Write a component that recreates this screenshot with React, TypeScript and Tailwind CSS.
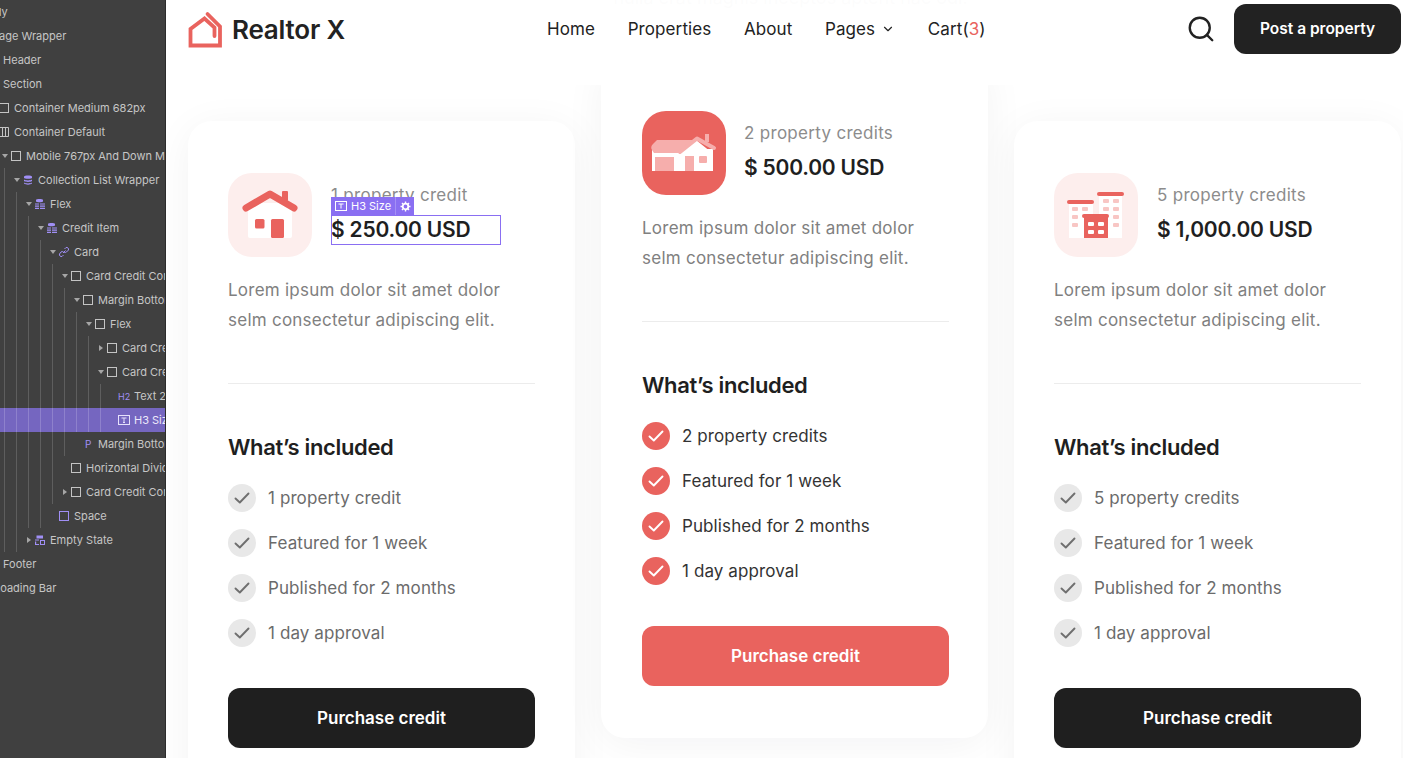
import { ChevronDown, Search } from "lucide-react";

const UI_FONT = "font-['Inter',sans-serif]";

type TreeIcon =
  | "box"
  | "boxPurple"
  | "columns"
  | "db"
  | "dbList"
  | "link"
  | "h2"
  | "text"
  | "p"
  | "empty"
  | "none";

type TreeRow = {
  label: string;
  x: number;
  icon: TreeIcon;
  caret?: "down" | "right";
};

const treeRows: TreeRow[] = [
  { label: "Body", x: -19, icon: "none" },
  { label: "Page Wrapper", x: -8, icon: "none" },
  { label: "Header", x: 3, icon: "none" },
  { label: "Section", x: 3, icon: "none" },
  { label: "Container Medium 682px", x: 14, icon: "box" },
  { label: "Container Default", x: 14, icon: "columns" },
  { label: "Mobile 767px And Down Menu", x: 26, icon: "box", caret: "down" },
  { label: "Collection List Wrapper", x: 38, icon: "db", caret: "down" },
  { label: "Flex", x: 50, icon: "dbList", caret: "down" },
  { label: "Credit Item", x: 62, icon: "dbList", caret: "down" },
  { label: "Card", x: 74, icon: "link", caret: "down" },
  { label: "Card Credit Content", x: 86, icon: "box", caret: "down" },
  { label: "Margin Bottom", x: 98, icon: "box", caret: "down" },
  { label: "Flex", x: 110, icon: "box", caret: "down" },
  { label: "Card Credit", x: 122, icon: "box", caret: "right" },
  { label: "Card Credit", x: 122, icon: "box", caret: "down" },
  { label: "Text 2", x: 134, icon: "h2" },
  { label: "H3 Size", x: 134, icon: "text" },
  { label: "Margin Bottom", x: 98, icon: "p" },
  { label: "Horizontal Divider", x: 86, icon: "box" },
  { label: "Card Credit Content", x: 86, icon: "box", caret: "right" },
  { label: "Space", x: 74, icon: "boxPurple" },
  { label: "Empty State", x: 50, icon: "empty", caret: "right" },
  { label: "Footer", x: 3, icon: "none" },
  { label: "Loading Bar", x: -6, icon: "none" },
];

// vertical tree guides: x and first/last row index they cross
const guides = [
  { x: 4, from: 7, to: 22 },
  { x: 16, from: 8, to: 22 },
  { x: 28, from: 9, to: 21 },
  { x: 40, from: 10, to: 21 },
  { x: 52, from: 11, to: 20 },
  { x: 64, from: 12, to: 18 },
  { x: 76, from: 13, to: 17 },
  { x: 88, from: 14, to: 17 },
  { x: 100, from: 16, to: 17 },
];

function NodeIcon({ icon }: { icon: TreeIcon }) {
  if (icon === "h2") {
    return <span className="w-3 text-[9px] leading-none text-[#a08ff5]">H2</span>;
  }
  if (icon === "p") {
    return <span className="w-3 pl-[3px] text-[10px] leading-none text-[#a08ff5]">P</span>;
  }
  const purple = "#a08ff5";
  const gray = "#c4c4c4";
  return (
    <svg width="12" height="12" viewBox="0 0 12 12" fill="none" className="shrink-0">
      {icon === "box" && <rect x="1.500" y="1.500" width="9" height="9" stroke={gray} />}
      {icon === "boxPurple" && <rect x="1.500" y="1.500" width="9" height="9" stroke={purple} />}
      {icon === "columns" && (
        <path d="M1.500 1.500h9v9h-9zM4.500 1.500v9M7.500 1.500v9" stroke={gray} />
      )}
      {icon === "db" && (
        <path
          d="M2 2.500C2 1 10 1 10 2.500V4C10 5 2 5 2 4ZM2 5.500C4 6.700 8 6.700 10 5.500V7C8 8.200 4 8.200 2 7ZM2 8.500C4 9.700 8 9.700 10 8.500V9.500C8 11 4 11 2 9.500Z"
          fill={purple}
        />
      )}
      {icon === "dbList" && (
        <path
          d="M2 2C2 .8 9 .8 9 2V3.600C9 4.600 2 4.600 2 3.600ZM1 5.400h4v1.200H1ZM6 5.400h5v1.200H6ZM1 7.600h4v1.200H1ZM6 7.600h5v1.200H6ZM1 9.800h4v1.200H1ZM6 9.800h5v1.200H6Z"
          fill={purple}
        />
      )}
      {icon === "link" && (
        <path
          d="M5 7l2.500-2.500M6.500 3l1.500-1.500a2 2 0 0 1 2.500 2.500L8.500 6a2 2 0 0 1-2.500 0M5.500 6a2 2 0 0 0-2.500 0L1.500 8a2 2 0 0 0 2.500 2.500L5.500 9"
          stroke={purple}
        />
      )}
      {icon === "text" && (
        <g stroke="#e6e1fb">
          <rect x=".5" y="1.500" width="11" height="9" />
          <path d="M3.500 4h5M6 4v4.500M5 8.500h2" />
        </g>
      )}
      {icon === "empty" && (
        <path
          d="M2.500 1.500h6.500v3H2.500ZM1 5.500h4v1H1ZM1 7.500h1.200v2.500H5v1H1ZM6 6h5v5H6Zm1 1v3h3V7Z"
          fill={purple}
        />
      )}
    </svg>
  );
}

function Sidebar() {
  return (
    <aside className="h-full w-[166px] shrink-0 overflow-hidden border-r border-[#2c2c2c] bg-[#404040] font-['Inter',sans-serif] text-[11px] text-[#c6c6c6]">
      {treeRows.map((row, i) => (
        <div key={i} className={`relative h-6 ${i === 17 ? "bg-[#7566c0] text-[#ece9fa]" : ""}`}>
          {guides
            .filter((g) => i >= g.from && i <= g.to)
            .map((g) => (
              <span
                key={g.x}
                className={`absolute top-0 bottom-0 w-px ${i === 17 ? "bg-[#8e81cc]" : "bg-[#5e5e5e]"}`}
                style={{ left: g.x }}
              />
            ))}
          <div
            className="flex h-full items-center whitespace-nowrap"
            style={{ marginLeft: row.x - 26 }}
          >
            <span className="flex w-[10px] shrink-0 items-center justify-center">
              {row.caret === "down" && (
                <span className="border-x-[3px] border-t-[4px] border-x-transparent border-t-[#a6a6a6]" />
              )}
              {row.caret === "right" && (
                <span className="border-y-[3px] border-l-[4px] border-y-transparent border-l-[#a6a6a6]" />
              )}
            </span>
            <span className="flex w-[16px] shrink-0 items-center">
              {row.icon !== "none" && <NodeIcon icon={row.icon} />}
            </span>
            <span>{row.label}</span>
          </div>
        </div>
      ))}
    </aside>
  );
}

function Logo() {
  return (
    <svg width="36" height="38" viewBox="0 0 36 38" fill="none">
      <path
        d="M27.500 25V16.500L17.500 7.500L3.500 18V34.500H33V15.500L20.500 3"
        stroke="#e9635e"
        strokeWidth="3.800"
        strokeLinecap="round"
        strokeLinejoin="miter"
      />
    </svg>
  );
}

function Header() {
  return (
    <header className="absolute inset-x-0 top-0 z-20 flex h-[85px] items-start bg-white/95 pl-[21px] pr-[2px]">
      <div className="mt-[10px] flex w-[360px] items-center gap-[9px]">
        <Logo />
        <span className="text-[26px] font-semibold tracking-[-0.2px] text-[#222]">Realtor X</span>
      </div>
      <nav className="mt-[14px] flex items-center gap-[32.6px] text-[17px] leading-[30px] tracking-[0.1px] text-[#222]">
        <a>Home</a>
        <a>Properties</a>
        <a>About</a>
        <a className="flex items-center gap-[6px]">
          Pages <ChevronDown size={14} strokeWidth={2} />
        </a>
        <a>
          Cart(<span className="text-[#e9635e]">3</span>)
        </a>
      </nav>
      <div className="ml-auto mt-1 flex items-center gap-[18px]">
        <Search size={30} strokeWidth={1.9} className="text-[#222]" />
        <button className="h-[50px] w-[167px] rounded-xl bg-[#222] text-[15.5px] font-semibold text-white">
          Post a property
        </button>
      </div>
    </header>
  );
}

function HouseIcon() {
  return (
    <svg width="84" height="84" viewBox="0 0 84 84" fill="none">
      <rect x="20" y="30" width="44" height="35" rx="2" fill="#fff" />
      <rect x="54" y="18" width="6" height="10" rx="1" fill="#e9635e" />
      <path d="M18 35L42 21L66 35" stroke="#e9635e" strokeWidth="7" strokeLinecap="round" strokeLinejoin="round" />
      <rect x="27" y="46" width="9.500" height="9.500" rx="1.500" fill="#e9635e" />
      <rect x="43" y="46" width="13" height="19" rx="1.500" fill="#e9635e" />
    </svg>
  );
}

function VillaIcon() {
  return (
    <svg width="84" height="84" viewBox="0 0 84 84" fill="none">
      <rect x="10" y="38" width="61" height="22" fill="#fff" />
      <path d="M38 41L54 29L69 41V60H38Z" fill="#fff" />
      <rect x="63" y="23" width="4" height="8" fill="#f6aeac" />
      <path d="M10 39Q8 36 11 33L15 29H52L38 42H12Z" fill="#f6aeac" />
      <path d="M38 41L55 27.500L72 37" stroke="#f6aeac" strokeWidth="4" strokeLinecap="round" strokeLinejoin="round" />
      <rect x="13" y="46" width="19" height="14" fill="#f6aeac" />
      <rect x="43" y="45" width="9" height="15" fill="#f6aeac" />
      <rect x="57" y="45" width="8" height="7" rx="1" fill="#f6aeac" />
    </svg>
  );
}

function BuildingsIcon() {
  const pink = "#f8c6c4";
  return (
    <svg width="84" height="84" viewBox="0 0 84 84" fill="none">
      <rect x="15" y="29" width="24" height="36" fill="#fff" />
      <rect x="45" y="20" width="23" height="45" fill="#fff" />
      <rect x="13" y="27" width="27" height="4" rx="2" fill="#e9635e" />
      <rect x="43" y="19" width="27" height="4" rx="2" fill="#e9635e" />
      {[
        [18, 34],
        [28, 34],
        [18, 42],
        [18, 50],
        [49, 26],
        [59, 26],
        [49, 34],
        [59, 34],
        [59, 42],
        [59, 50],
      ].map(([x, y]) => (
        <rect key={`${x}-${y}`} x={x} y={y} width="6" height="4" rx="1" fill={pink} />
      ))}
      <rect x="30" y="43" width="24" height="22" fill="#e9635e" />
      <rect x="28" y="41" width="27" height="4" rx="2" fill="#e9635e" />
      {[
        [34, 49],
        [44, 49],
        [34, 57],
        [44, 57],
      ].map(([x, y]) => (
        <rect key={`${x}-${y}`} x={x} y={y} width="6" height="4" rx="1" fill="#fff" />
      ))}
    </svg>
  );
}

function CheckDot({ active }: { active?: boolean }) {
  return (
    <span
      className={`flex h-7 w-7 shrink-0 items-center justify-center rounded-full ${
        active ? "bg-[#e9635e]" : "bg-[#e8e8e8]"
      }`}
    >
      <svg width="16" height="12" viewBox="0 0 16 12" fill="none">
        <path
          d="M1.500 6.500L5.800 10.500L14.500 1.500"
          stroke={active ? "#fff" : "#6f6f6f"}
          strokeWidth="1.900"
          strokeLinecap="round"
          strokeLinejoin="round"
        />
      </svg>
    </span>
  );
}

function SelectionOverlay() {
  return (
    <>
      <div className="absolute left-0 top-[24px] flex h-[18px] items-center bg-[#8a6ff2] text-[11px] leading-none tracking-normal text-white">
        <span className="flex h-full items-center gap-[4px] border-r border-[#a490f5] px-[4px]">
          <svg width="12" height="12" viewBox="0 0 12 12" fill="none" stroke="#fff">
            <rect x=".5" y="1.500" width="11" height="9" />
            <path d="M3.500 4h5M6 4v4.500" />
          </svg>
          H3 Size
        </span>
        <span className="flex h-full w-[18px] items-center justify-center">
          <svg width="11" height="11" viewBox="0 0 11 11" fill="none">
            <circle cx="5.500" cy="5.500" r="2.800" stroke="#fff" strokeWidth="1.800" />
            <path
              d="M5.500 .5v2M5.500 8.500v2M.5 5.500h2M8.500 5.500h2M2 2l1.400 1.400M7.600 7.600L9 9M2 9l1.400-1.400M7.600 3.400L9 2"
              stroke="#fff"
              strokeWidth="1.400"
            />
          </svg>
        </span>
      </div>
      <div className="absolute left-0 top-[42px] h-[30px] w-[170px] border border-[#8a6ff2]" />
    </>
  );
}

type Credit = {
  title: string;
  price: string;
  icon: React.ReactNode;
  items: string[];
  featured?: boolean;
  selected?: boolean;
};

const credits: Credit[] = [
  {
    title: "1 property credit",
    price: "$ 250.00 USD",
    icon: <HouseIcon />,
    items: ["1 property credit", "Featured for 1 week", "Published for 2 months", "1 day approval"],
    selected: true,
  },
  {
    title: "2 property credits",
    price: "$ 500.00 USD",
    icon: <VillaIcon />,
    items: ["2 property credits", "Featured for 1 week", "Published for 2 months", "1 day approval"],
    featured: true,
  },
  {
    title: "5 property credits",
    price: "$ 1,000.00 USD",
    icon: <BuildingsIcon />,
    items: ["5 property credits", "Featured for 1 week", "Published for 2 months", "1 day approval"],
  },
];

function CreditCard({ credit }: { credit: Credit }) {
  const { featured } = credit;
  return (
    <div
      className={`rounded-[24px] bg-white pb-[52px] pt-[52px] shadow-[0_6px_40px_rgba(20,20,40,0.05)] ${
        featured ? "pl-[41px] pr-[39px]" : "mt-[62px] px-10"
      }`}
    >
      <div className={`flex items-start ${featured ? "gap-[18px]" : "gap-[19px]"}`}>
        <div
          className={`h-[84px] w-[84px] shrink-0 overflow-hidden rounded-[24px] ${
            featured ? "bg-[#e9635e]" : "bg-[#fdeeed]"
          }`}
        >
          {credit.icon}
        </div>
        <div className="relative pt-[7px]">
          <div className="text-[17px] leading-[30px] tracking-[0.3px] text-[#8c8c8c]">{credit.title}</div>
          <div className="mt-[5px] text-[21px] font-semibold leading-[30px] tracking-[-0.2px] text-[#1f1f1f]">
            {credit.price}
          </div>
          {credit.selected && <SelectionOverlay />}
        </div>
      </div>
      <p className="mt-[18px] text-[17px] leading-[30px] tracking-[0.25px] text-[#808080]">
        Lorem ipsum dolor sit amet dolor
        <br />
        selm consectetur adipiscing elit.
      </p>
      <div className="mt-12 h-px bg-[#ececec]" />
      <h3 className="mt-12 text-[22px] font-semibold leading-[30px] tracking-[-0.35px] text-[#1f1f1f]">
        What’s included
      </h3>
      <ul className="mt-[22px] flex flex-col gap-[17px]">
        {credit.items.map((item) => (
          <li
            key={item}
            className={`flex h-7 items-center gap-3 text-[17px] tracking-[0.1px] ${
              featured ? "text-[#333]" : "text-[#6b6b6b]"
            }`}
          >
            <CheckDot active={featured} />
            <span className="pt-[2px]">{item}</span>
          </li>
        ))}
      </ul>
      <button
        className={`mt-[41px] h-[60px] w-full rounded-xl pt-[2px] text-[17px] font-semibold text-white ${
          featured ? "bg-[#e9635e]" : "bg-[#1f1f1f]"
        }`}
      >
        Purchase credit
      </button>
    </div>
  );
}

export default function App() {
  return (
    <div className={`flex h-[758px] w-[1403px] overflow-hidden bg-white ${UI_FONT}`}>
      <Sidebar />
      <main className="relative h-full flex-1 overflow-hidden">
        <Header />
        <p className="-mt-[17px] h-[30px] pl-[12px] text-center text-[18px] leading-[30px] text-[#c4c4c4]">
          nulla erat magnis inceptos aptent hac odi.
        </p>
        <div className="mt-[46px] grid grid-cols-3 gap-[26px] pl-[22px] pr-[2px] items-start">
          {credits.map((credit) => (
            <CreditCard key={credit.title} credit={credit} />
          ))}
        </div>
      </main>
    </div>
  );
}
